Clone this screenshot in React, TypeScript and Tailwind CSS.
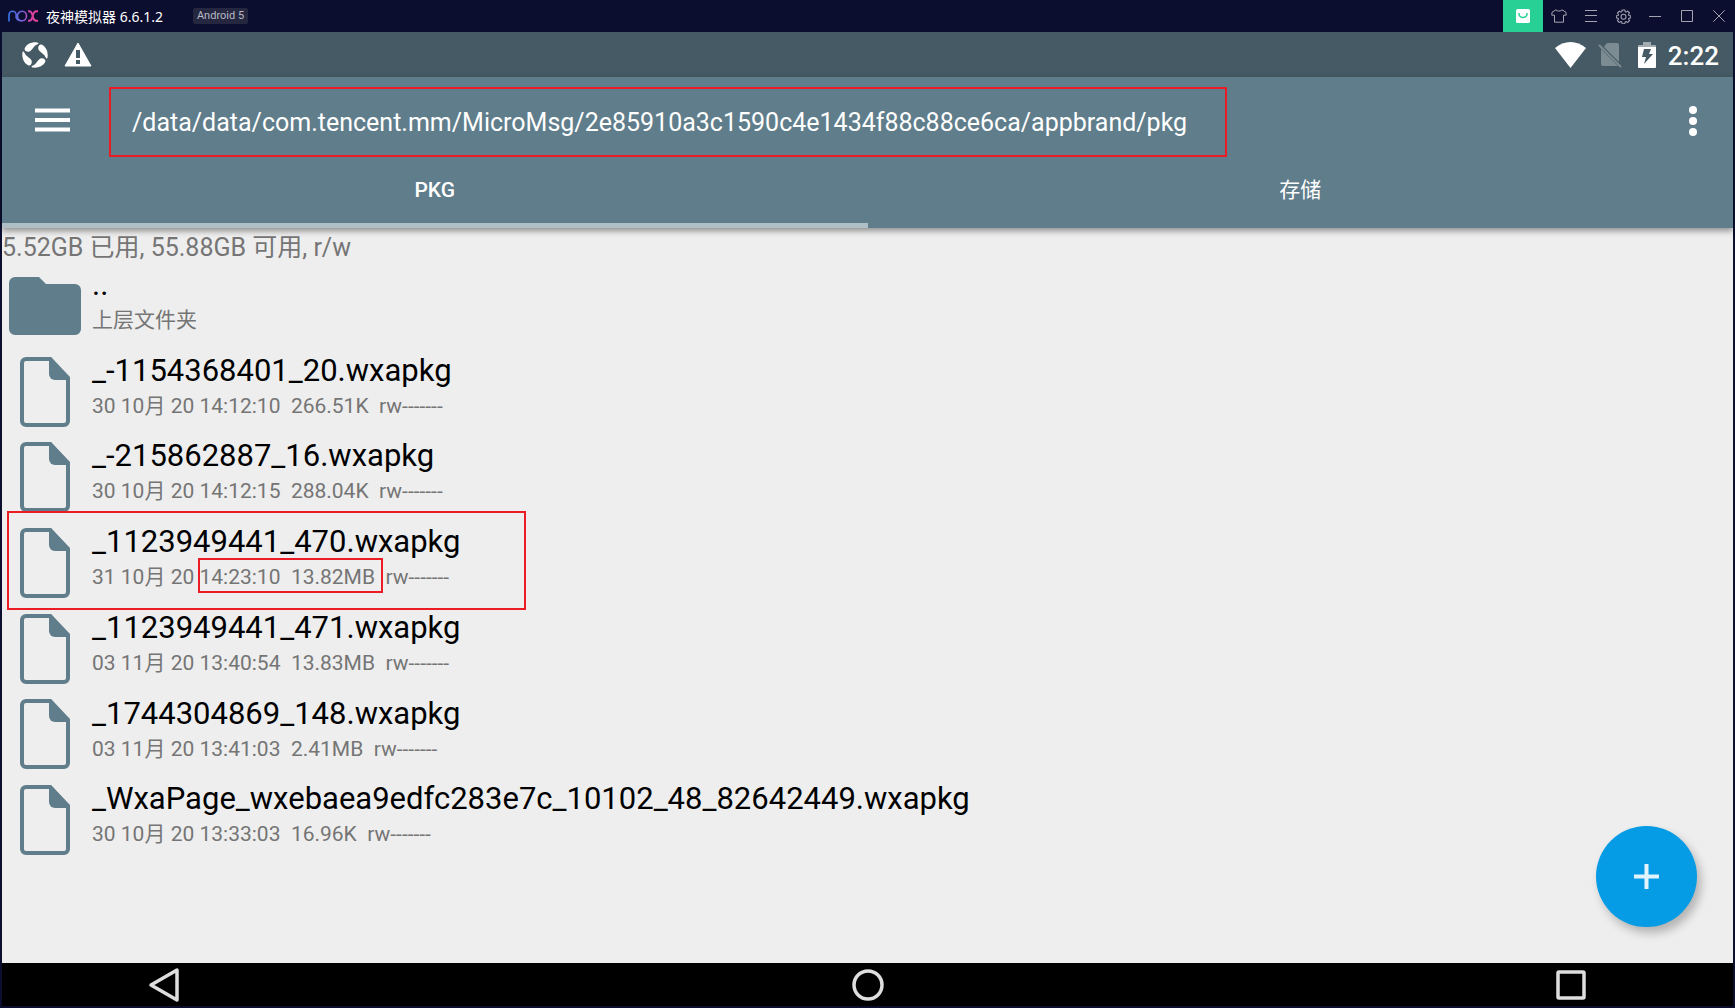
const files = [
  { name: "_-1154368401_20.wxapkg", date: "30 10月 20", time: "14:12:10", size: "266.51K" },
  { name: "_-215862887_16.wxapkg", date: "30 10月 20", time: "14:12:15", size: "288.04K" },
  { name: "_1123949441_470.wxapkg", date: "31 10月 20", time: "14:23:10", size: "13.82MB", marked: true },
  { name: "_1123949441_471.wxapkg", date: "03 11月 20", time: "13:40:54", size: "13.83MB" },
  { name: "_1744304869_148.wxapkg", date: "03 11月 20", time: "13:41:03", size: "2.41MB" },
  {
    name: "_WxaPage_wxebaea9edfc283e7c_10102_48_82642449.wxapkg",
    date: "30 10月 20",
    time: "13:33:03",
    size: "16.96K",
  },
];

const NoxLogo = () => (
  <svg width="32" height="14" viewBox="0 0 32 14" fill="none" strokeWidth="1.600">
    <defs>
      <linearGradient id="nox" gradientUnits="userSpaceOnUse" x1="0" y1="0" x2="32" y2="0">
        <stop offset="0" stopColor="#2f7cf0" />
        <stop offset="0.5" stopColor="#7a5fd8" />
        <stop offset="0.7" stopColor="#d044a8" />
        <stop offset="1" stopColor="#f2408c" />
      </linearGradient>
    </defs>
    <g stroke="url(#nox)">
      <path d="M2 12.500V6a3.600 3.800 0 0 1 7.200 0v3" />
      <ellipse cx="15" cy="7" rx="4.500" ry="4.800" />
      <path d="M9.200 8c.3 2.500 2 3.800 5.800 3.800" />
      <path d="M21 2.200h1c2 0 3 1 3.700 4.800s1.800 4.800 3.800 4.800H31M31 2.200h-1.500c-2 0-3 1-3.800 4.800s-1.700 4.800-3.700 4.800h-1" strokeWidth="2" />
    </g>
  </svg>
);

const FileIcon = () => (
  <svg width="50" height="70" viewBox="0 0 50 70">
    <path
      d="M6 2H30L48 22V64a4 4 0 0 1-4 4H6a4 4 0 0 1-4-4V6a4 4 0 0 1 4-4z"
      fill="none"
      stroke="#607d8b"
      strokeWidth="4"
    />
    <path d="M29 0h2l19 20v3H35a6 6 0 0 1-6-6z" fill="#607d8b" />
  </svg>
);

const FolderIcon = () => (
  <svg width="72" height="58" viewBox="0 0 72 58">
    <path
      d="M6 0H30l7 7H66a6 6 0 0 1 6 6V52a6 6 0 0 1-6 6H6a6 6 0 0 1-6-6V6a6 6 0 0 1 6-6z"
      fill="#607d8b"
    />
  </svg>
);

const TitleBar = () => (
  <header className="flex h-8 shrink-0 items-center justify-between pl-[7px]">
    <div className="flex items-center">
      <NoxLogo />
      <h1 className="ml-[7px] pt-px font-['Noto_Sans','Noto_Sans_CJK_SC',sans-serif] text-sm text-white">
        夜神模拟器 6.6.1.2
      </h1>
      <span className="ml-[30px] rounded-xs bg-[#25263f] px-1 text-[11px] leading-4 text-[#b9bac6]">
        Android 5
      </span>
    </div>
    <div className="flex h-full text-[#a3a4b2]">
      <button aria-label="Store" className="flex w-10 items-center justify-center bg-[#29d096]">
        <svg width="14" height="14" viewBox="0 0 14 14" fill="none">
          <rect width="14" height="14" rx="1.500" fill="#fff" />
          <path d="M3 4v1a4 3.500 0 0 0 8 0V4" stroke="#29d096" strokeWidth="1.500" />
        </svg>
      </button>
      <button aria-label="Themes" className="flex w-8 items-center justify-center">
        <svg width="16" height="14" viewBox="0 0 16 14" fill="none" stroke="currentColor">
          <path d="M5 .8 1 3.300.8 6.200H3.500V13.200h9V6.200h2.700L15 3.300 11 .8C10 2.500 6 2.500 5 .8z" strokeLinejoin="round" />
        </svg>
      </button>
      <button aria-label="Menu" className="flex w-8 items-center justify-center">
        <svg width="12" height="12" viewBox="0 0 12 12" stroke="currentColor">
          <path d="M0 .5h12M0 5.500h12M0 11.500h12" />
        </svg>
      </button>
      <button aria-label="Settings" className="flex w-8 items-center justify-center">
        <svg width="15" height="15" viewBox="0 0 24 24" fill="none" stroke="currentColor" strokeWidth="1.700" strokeLinejoin="round">
          <path d="M9.800 1.500h4.400l.5 2.800 1.500.7 2.400-1.700 3.100 3.100L20 8.800l.7 1.500 2.800.5v3.400l-2.800.5L20 16.200l1.700 2.400-3.100 3.100-2.400-1.700-1.500.7-.5 2.800H9.800l-.5-2.800-1.500-.7-2.400 1.700-3.100-3.100L4 16.200l-.7-1.500-2.800-.5v-3.400l2.800-.5L4 8.800 2.300 6.400l3.100-3.100L7.800 5l1.500-.7z" />
          <circle cx="12" cy="12.500" r="4" />
        </svg>
      </button>
      <button aria-label="Minimize" className="flex w-8 items-center justify-center">
        <svg width="12" height="12" viewBox="0 0 12 12" stroke="currentColor">
          <path d="M0 6.500h12" />
        </svg>
      </button>
      <button aria-label="Maximize" className="flex w-8 items-center justify-center">
        <svg width="12" height="12" viewBox="0 0 12 12" fill="none" stroke="currentColor">
          <path d="M.5.5h11v11H.5z" />
        </svg>
      </button>
      <button aria-label="Close" className="flex w-8 items-center justify-center">
        <svg width="12" height="12" viewBox="0 0 12 12" stroke="currentColor">
          <path d="M.3.3l11.400 11.400M11.700.3.3 11.700" />
        </svg>
      </button>
    </div>
  </header>
);

const StatusBar = () => (
  <div className="flex h-[45px] shrink-0 items-center justify-between bg-[#455a64] pr-[14px] pl-5">
    <div className="flex items-center gap-4">
      <svg width="26" height="26" viewBox="0 0 26 26" fill="#fff">
        <path id="blade" d="M2.800 6C5 2 9.500-.2 15 .4 17.500.7 16.500 2 15 2.600 11 4 10 9.800 6.300 9.800 3.800 9.800 2 8.200 2.800 6z" />
        <use href="#blade" transform="rotate(90 13 13)" />
        <use href="#blade" transform="rotate(180 13 13)" />
        <use href="#blade" transform="rotate(270 13 13)" />
      </svg>
      <svg width="28" height="25" viewBox="0 0 28 25">
        <path d="M14 1 27 24H1z" fill="#fff" stroke="#fff" strokeLinejoin="round" />
        <path d="M12 8h4v8h-4zM12 18h4v4h-4z" fill="#455a64" />
      </svg>
    </div>
    <div className="flex items-center">
      <svg width="31" height="26" viewBox="0 0 31 26">
        <path d="M0 6C9-2 22-2 31 6L15.500 26z" fill="#fff" />
      </svg>
      <svg className="ml-3" width="24" height="26" viewBox="0 0 24 26">
        <path d="M8 2q1-1 2-1h9q2 0 2 2v17L6 5zM3 7l17 17H5q-2 0-2-2z" fill="#7d8b92" />
        <path d="M1 3 23 25" stroke="#7d8b92" strokeWidth="2" />
      </svg>
      <svg className="ml-4" width="18" height="26" viewBox="0 0 18 26">
        <path d="M5 0h8v3h4q1 0 1 1v1H0V4q0-1 1-1h4z" fill="#a2adb2" />
        <path d="M0 5h18v20q0 1-1 1H1q-1 0-1-1z" fill="#fff" />
        <path d="M6 7h7l-2 5h4L6 22l2-7H4z" fill="#455a64" />
      </svg>
      <time className="ml-3 pt-[2px] text-[26px] leading-8 font-medium text-white">2:22</time>
    </div>
  </div>
);

const App = () => {
  return (
    <div className="flex min-h-screen flex-col bg-[#0c0e2f] font-[Roboto,'Noto_Sans_CJK_SC',sans-serif]">
      <TitleBar />
      <div className="relative mr-[2px] mb-[2px] ml-[2px] flex flex-1 flex-col bg-[#eeeeee]">
        <StatusBar />

        <div className="z-10 shrink-0 bg-[#607d8b] text-white shadow-[0_3px_6px_rgba(0,0,0,0.4)]">
          <div className="flex items-center pt-[10px] pr-8 pl-[33px]">
            <button aria-label="Open drawer" className="pb-1">
              <svg width="35" height="24" viewBox="0 0 35 24" stroke="#fff" strokeWidth="4">
                <path d="M0 2.500h35M0 12h35M0 21.500h35" />
              </svg>
            </button>
            <h2 className="ml-[39px] border-2 border-[#ed1c24] pt-[17px] pr-[38px] pb-[15px] pl-[21px] text-[25px] leading-[34px] whitespace-nowrap">
              /data/data/com.tencent.mm/MicroMsg/2e85910a3c1590c4e1434f88c88ce6ca/appbrand/pkg
            </h2>
            <button aria-label="More options" className="ml-auto pr-1 pb-[2px]">
              <svg width="8" height="30" viewBox="0 0 8 30" fill="#fff">
                <circle cx="4" cy="4" r="4" />
                <circle cx="4" cy="15" r="4" />
                <circle cx="4" cy="26" r="4" />
              </svg>
            </button>
          </div>
          <div role="tablist" className="grid h-[71px] grid-cols-2 text-[21px]">
            <button role="tab" aria-selected="true" className="border-b-5 border-[#b0bec5] pt-[2px] font-medium">
              PKG
            </button>
            <button role="tab" aria-selected="false" className="border-b-5 border-transparent pt-[2px]">
              存储
            </button>
          </div>
        </div>

        <main className="flex-1">
          <p className="pt-[5px] text-[25px] leading-[30px] text-[#757575]">
            5.52GB 已用, 55.88GB 可用, r/w
          </p>
          <ul className="grid min-h-[600px] auto-rows-fr">
            <li>
              <button className="flex h-full w-full items-center text-left">
                <span className="flex w-[86px] justify-center">
                  <FolderIcon />
                </span>
                <span className="self-start pt-px pl-1">
                  <span className="block text-[31px] leading-[42px] text-black">..</span>
                  <span className="block text-[21px] leading-7 text-[#757575]">上层文件夹</span>
                </span>
              </button>
            </li>
            {files.map((file) => (
              <li key={file.name} className="relative">
                <button className="flex h-full w-full items-center text-left">
                  <span className="flex w-[86px] justify-center">
                    <FileIcon />
                  </span>
                  <span className="self-start pt-px pl-1">
                    <span className="block text-[31px] leading-[42px] text-black">{file.name}</span>
                    <span className="block text-[21px] leading-7 whitespace-pre text-[#757575]">
                      {file.date}{" "}
                      <span className="relative">
                        {file.time}
                        {"  "}
                        {file.size}
                        {file.marked && (
                          <span className="absolute -top-[7px] -right-2 -bottom-1 -left-px border-2 border-[#ed1c24]" />
                        )}
                      </span>
                      {"  rw-------"}
                    </span>
                  </span>
                </button>
                {file.marked && (
                  <span className="pointer-events-none absolute -top-[9px] left-[5px] h-[99px] w-[519px] border-2 border-[#ed1c24]" />
                )}
              </li>
            ))}
          </ul>
        </main>

        <button
          aria-label="Add"
          className="absolute right-9 bottom-[79px] flex size-[101px] items-center justify-center rounded-full bg-[#059be5] shadow-[4px_6px_10px_rgba(0,0,0,0.25)]"
        >
          <svg width="25" height="25" viewBox="0 0 25 25" stroke="#e1f3fc" strokeWidth="4">
            <path d="M12.500 0v25M0 12.500h25" />
          </svg>
        </button>

        <nav className="flex h-[43px] shrink-0 items-center justify-between bg-black px-[146px]">
          <button aria-label="Back">
            <svg width="32" height="36" viewBox="0 0 32 36" fill="none" stroke="#dedede" strokeWidth="3.500">
              <path d="M3 18 29 3v30z" strokeLinejoin="round" />
            </svg>
          </button>
          <button aria-label="Home">
            <svg width="32" height="32" viewBox="0 0 32 32" fill="none" stroke="#dedede" strokeWidth="3.500">
              <circle cx="16" cy="16" r="14" />
            </svg>
          </button>
          <button aria-label="Recent apps">
            <svg width="32" height="30" viewBox="0 0 32 30" fill="none" stroke="#dedede" strokeWidth="3.500">
              <rect x="3" y="2" width="26" height="26" rx="1" />
            </svg>
          </button>
        </nav>
      </div>
    </div>
  );
};

export default App;
